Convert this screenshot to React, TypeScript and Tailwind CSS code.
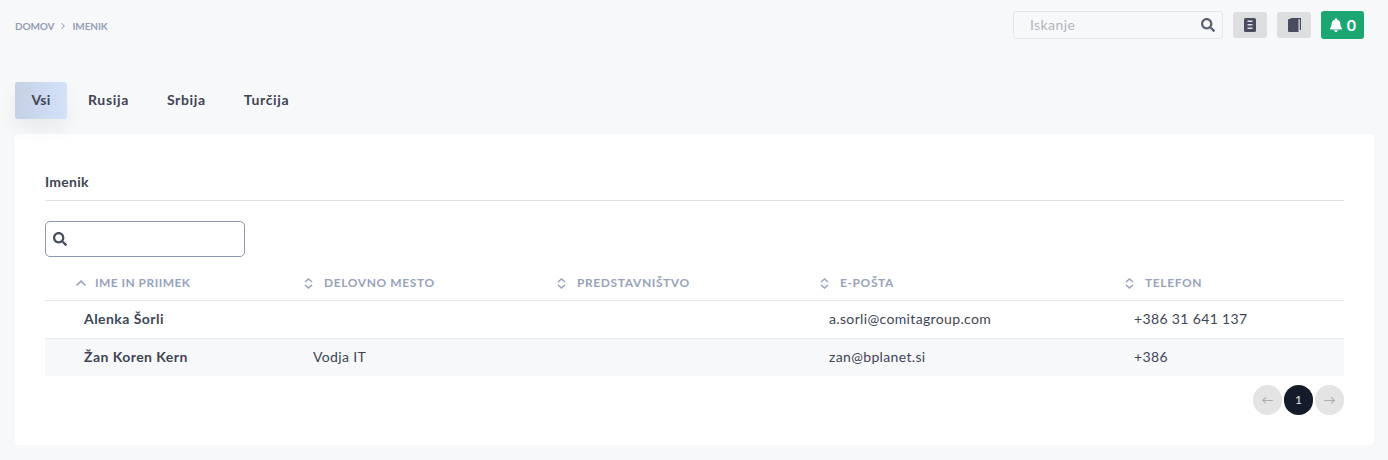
import { FaBell, FaSearch } from "react-icons/fa";
import { ChevronRight } from "lucide-react";

const tabs = ["Vsi", "Rusija", "Srbija", "Turčija"];

const columns = [
  { label: "IME IN PRIIMEK", width: "w-[258px]", pad: "pl-[30px]", active: true },
  { label: "DELOVNO MESTO", width: "w-[253px]", pad: "pl-0", active: false },
  { label: "PREDSTAVNIŠTVO", width: "w-[263px]", pad: "pl-0", active: false },
  { label: "E-POŠTA", width: "w-[305px]", pad: "pl-0", active: false },
  { label: "TELEFON", width: "w-[220px]", pad: "pl-0", active: false },
];

const people = [
  { name: "Alenka Šorli", job: "", office: "", email: "a.sorli@comitagroup.com", phone: "+386 31 641 137" },
  { name: "Žan Koren Kern", job: "Vodja IT", office: "", email: "zan@bplanet.si", phone: "+386" },
];

function NoteIcon() {
  return (
    <svg width="12" height="14" viewBox="0 0 12 14">
      <rect width="12" height="14" rx="1.5" fill="#474d5f" />
      <rect x="3.5" y="2.5" width="5" height="1.5" fill="#dcdedf" />
      <rect x="3.5" y="6" width="5" height="1.5" fill="#dcdedf" />
      <rect x="3.5" y="9.5" width="5" height="1.5" fill="#dcdedf" />
    </svg>
  );
}

function CopyBookIcon() {
  return (
    <svg width="13" height="14" viewBox="0 0 13 14">
      <path d="M2.5 0H13v12h-1.2V1.2H2.5z" fill="#474d5f" />
      <path d="M0 2a1 1 0 0 1 1-1h9.5v13H1a1 1 0 0 1-1-1z" fill="#474d5f" />
    </svg>
  );
}

function SortIcon({ active }: { active: boolean }) {
  if (active) {
    return (
      <svg width="12" height="11" viewBox="0 0 12 11" fill="none" stroke="currentColor" strokeWidth="1.7">
        <path d="M1.5 7.5 6 3.2l4.5 4.3" />
      </svg>
    );
  }
  return (
    <svg width="11" height="11" viewBox="0 0 11 11" fill="none" stroke="currentColor" strokeWidth="1.5">
      <path d="M2 4 5.5 1 9 4M2 7l3.5 3L9 7" />
    </svg>
  );
}

export default function App() {
  return (
    <div className="min-h-[460px] bg-[#f7f8fa] pl-[15px] pr-[14px] font-['Lato',sans-serif] text-[#3f4555]">
      {/* Header */}
      <header className="flex h-[50px] items-center justify-between">
        <div className="mt-[2px] flex items-center gap-[4px] text-[10px] font-bold tracking-[-0.1px] text-[#949db6]">
          <span>DOMOV</span>
          <ChevronRight size={10} strokeWidth={2.5} />
          <span>IMENIK</span>
        </div>
        <div className="mr-[10px] flex items-center">
          <div className="flex h-[28px] w-[210px] items-center justify-between rounded-[3px] border border-[#e3e6ec] pl-[16px] pr-[7px]">
            <span className="pb-[2px] text-[14px] tracking-[0.4px] text-[#b3b5bb]">Iskanje</span>
            <FaSearch size={14} className="text-[#5c6270]" />
          </div>
          <button className="ml-[10px] flex h-[26px] w-[34px] items-center justify-center rounded-[3px] bg-[#dcdedf]">
            <NoteIcon />
          </button>
          <button className="ml-[10px] flex h-[26px] w-[34px] items-center justify-center rounded-[3px] bg-[#dcdedf]">
            <CopyBookIcon />
          </button>
          <button className="ml-[10px] flex h-[28px] w-[43px] items-center justify-center gap-[4px] rounded-[3px] bg-[#1ba672] text-[16px] font-bold text-white">
            <FaBell size={14} />
            <span>0</span>
          </button>
        </div>
      </header>

      {/* Tabs */}
      <nav className="mt-[32px] flex items-center text-[14px] font-bold tracking-[0.65px]">
        {tabs.map((tab, i) => (
          <div
            key={tab}
            className={
              i === 0
                ? "mr-[2px] flex h-[37px] w-[52px] items-center justify-center rounded-[3px] bg-gradient-to-r from-[#c5d1e4] to-[#d3e1f9] pb-[2px] tracking-[0.25px] shadow-[0_10px_20px_rgba(0,0,0,0.06)]"
                : "flex h-[37px] items-center px-[19px] pb-[2px]"
            }
          >
            {tab}
          </div>
        ))}
      </nav>

      {/* Card */}
      <section className="mt-[15px] h-[311px] rounded-[4px] bg-white px-[30px]">
        <h2 className="flex h-[67px] items-end border-b border-[#dfe1e5] pb-[8px] text-[14px] font-bold tracking-[0.25px]">
          Imenik
        </h2>

        <div className="mt-[20px] flex h-[36px] w-[200px] items-center rounded-[5px] border border-[#8d97b3] pl-[7px]">
          <FaSearch size={14} className="text-[#474d5f]" />
        </div>

        <table className="mt-[8px] w-full table-fixed border-collapse">
          <thead>
            <tr className="h-[35px] border-b border-[#e8e9ec]">
              {columns.map((col) => (
                <th key={col.label} className={`${col.width} ${col.pad} pt-[2px] text-left`}>
                  <div
                    className={
                      col.active
                        ? "flex items-center gap-[8px] text-[12px] font-bold tracking-[0.45px] text-[#98a2ba]"
                        : "flex items-center gap-[10px] text-[12px] font-bold tracking-[0.6px] text-[#98a2ba]"
                    }
                  >
                    <SortIcon active={col.active} />
                    <span>{col.label}</span>
                  </div>
                </th>
              ))}
            </tr>
          </thead>
          <tbody className="text-[14px] tracking-[0.35px]">
            {people.map((person, i) => (
              <tr
                key={person.email}
                className={i % 2 === 1 ? "h-[38px] bg-[#f7f8fa]" : "h-[38px] border-b border-[#e8e9ec]"}
              >
                <td className="pb-[2px] pl-[39px] font-bold tracking-[0.45px]">{person.name}</td>
                <td className="pb-[2px] pl-[10px]">{person.job}</td>
                <td className="pb-[2px] pl-[10px]">{person.office}</td>
                <td className="pb-[2px] pl-[10px]">{person.email}</td>
                <td className="pb-[2px] pl-[10px]">{person.phone}</td>
              </tr>
            ))}
          </tbody>
        </table>

        {/* Pagination */}
        <div className="mt-[9px] flex justify-end gap-[2px] text-[12px]">
          <span className="flex h-[30px] w-[29px] items-center justify-center rounded-full bg-[#e4e4e4] text-[#a3a3a3]">←</span>
          <span className="flex h-[30px] w-[29px] items-center justify-center rounded-full bg-[#141c2b] text-[#e4e4e4]">1</span>
          <span className="flex h-[30px] w-[29px] items-center justify-center rounded-full bg-[#e4e4e4] text-[#a3a3a3]">→</span>
        </div>
      </section>
    </div>
  );
}
